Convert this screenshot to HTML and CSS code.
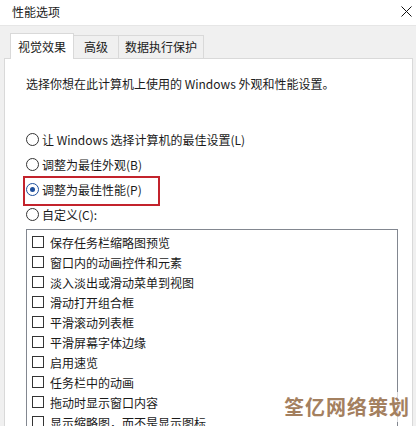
FILE: index.html
```html
<!DOCTYPE html>
<html lang="zh-CN">
<head>
<meta charset="utf-8">
<link rel="stylesheet" href="styles.css">
</head>
<body>
<div class="window">
  <div class="titlebar">
    <span class="title">性能选项</span>
    <svg class="close" width="11" height="11" viewBox="0 0 11 11"><path d="M0.5 0.5 L10.5 10.5 M10.5 0.5 L0.5 10.5" stroke="#111" stroke-width="1" fill="none"/></svg>
  </div>
  <div class="body">
    <div class="tabs">
      <div class="tab active">视觉效果</div>
      <div class="tab">高级</div>
      <div class="tab">数据执行保护</div>
    </div>
    <div class="panel">
      <p class="desc">选择你想在此计算机上使用的 Windows 外观和性能设置。</p>
      <div class="radios">
        <div class="radio-row"><span class="radio"></span><span>让 Windows 选择计算机的最佳设置(L)</span></div>
        <div class="radio-row"><span class="radio"></span><span>调整为最佳外观(B)</span></div>
        <div class="radio-row marked"><span class="radio on"></span><span>调整为最佳性能(P)</span></div>
        <div class="radio-row"><span class="radio"></span><span>自定义(C):</span></div>
      </div>
      <div class="listbox">
        <div class="item"><span class="cb"></span><span>保存任务栏缩略图预览</span></div>
        <div class="item"><span class="cb"></span><span>窗口内的动画控件和元素</span></div>
        <div class="item"><span class="cb"></span><span>淡入淡出或滑动菜单到视图</span></div>
        <div class="item"><span class="cb"></span><span>滑动打开组合框</span></div>
        <div class="item"><span class="cb"></span><span>平滑滚动列表框</span></div>
        <div class="item"><span class="cb"></span><span>平滑屏幕字体边缘</span></div>
        <div class="item"><span class="cb"></span><span>启用速览</span></div>
        <div class="item"><span class="cb"></span><span>任务栏中的动画</span></div>
        <div class="item"><span class="cb"></span><span>拖动时显示窗口内容</span></div>
        <div class="item"><span class="cb"></span><span>显示缩略图，而不是显示图标</span></div>
      </div>
    </div>
  </div>
  <div class="watermark">筌亿网络策划</div>
</div>
</body>
</html>
```
FILE: styles.css
```css
*, *::before, *::after {
  box-sizing: border-box;
}
html, body {
  margin: 0;
  padding: 0;
  width: 416px;
  height: 426px;
  overflow: hidden;
  background: #f0f0f0;
}
.window {
  position: relative;
  width: 416px;
  height: 426px;
  overflow: hidden;
  font-family: "Noto Sans CJK SC", "Noto Sans", sans-serif;
  font-size: 12px;
  color: #1a1a1a;
}
.titlebar {
  height: 25px;
  background: #fff;
  display: flex;
  align-items: center;
  justify-content: space-between;
  padding: 0 4px 2px 12px;
}
.title {
  font-size: 12px;
  line-height: 16px;
}
.body {
  background: #f0f0f0;
  padding: 8px 3px 0 4px;
  height: 401px;
  border-top: 1px solid #e6e6e6;
}
.tabs {
  display: flex;
  align-items: flex-end;
  padding-left: 6px;
  height: 24px;
  position: relative;
  z-index: 1;
}
.tab {
  height: 23px;
  line-height: 22px;
  text-align: center;
  white-space: nowrap;
  background: #f0f0f0;
  border: 1px solid #d9d9d9;
  border-bottom: none;
  margin-right: -1px;
}
.tab:nth-child(2) { width: 46px; }
.tab:nth-child(3) { width: 86px; }
.tab.active {
  background: #fff;
  height: 26px;
  line-height: 25px;
  margin-bottom: -1px;
  width: 64px;
}
.panel {
  background: #fff;
  border: 1px solid #d9d9d9;
  height: 380px;
  padding: 17px 14px 0 21px;
}
.desc {
  margin: 0;
  line-height: 16px;
}
.radios {
  margin-top: 35px;
}
.radio-row {
  display: flex;
  align-items: center;
  height: 25px;
  gap: 3px;
  position: relative;
}
.radio {
  width: 13px;
  height: 13px;
  border: 1px solid #333;
  border-radius: 50%;
  position: relative;
  flex: none;
}
.radio.on {
  border-color: #1e4f9c;
}
.radio.on::after {
  content: "";
  position: absolute;
  left: 3px;
  top: 3px;
  width: 5px;
  height: 5px;
  border-radius: 50%;
  background: #1e4f9c;
}
.marked::before {
  content: "";
  position: absolute;
  left: -3px;
  top: -1px;
  width: 137px;
  height: 30px;
  border: 2px solid #c3232c;
}
.listbox {
  margin-top: 2px;
  border: 1px solid #828790;
  height: 260px;
  padding-top: 2px;
}
.item {
  display: flex;
  align-items: center;
  height: 20px;
  gap: 6px;
  padding-left: 5px;
}
.cb {
  width: 12px;
  height: 12px;
  border: 1px solid #333;
  flex: none;
}
.watermark {
  position: absolute;
  right: 4px;
  bottom: 4px;
  padding: 2px 2px 2px 16px;
  background: rgba(255,255,255,0.7);
  color: #a4805f;
  font-weight: bold;
  font-size: 20px;
  line-height: 26px;
  letter-spacing: 1px;
}
```
